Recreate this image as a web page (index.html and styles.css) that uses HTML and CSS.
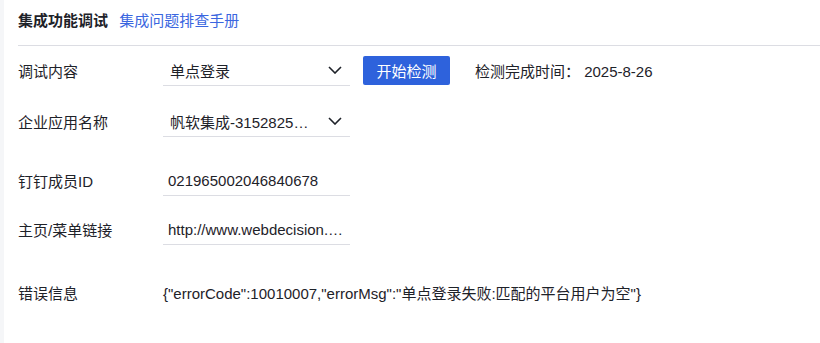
FILE: index.html
```html
<!DOCTYPE html>
<html lang="zh-CN">
  <head>
    <meta charset="UTF-8" />
    <meta name="viewport" content="width=device-width, initial-scale=1.0" />
    <title>集成功能调试</title>
    <link rel="stylesheet" href="styles.css">
  </head>
  <body>
    <div class="side"></div>
    <div class="main">
      <div class="header">
        <span class="title">集成功能调试</span>
        <a class="link" href="#">集成问题排查手册</a>
      </div>

      <!-- debug form -->
      <div class="row row-1">
        <div class="label">调试内容</div>
        <div class="select">
          <span class="value">单点登录</span>
          <svg class="arrow" width="14" height="8" viewBox="0 0 14 8"><path d="M1 1l6 6 6-6" fill="none" stroke="#1e2229" stroke-width="1.6"/></svg>
        </div>
        <button class="btn">开始检测</button>
        <span class="done">检测完成时间： 2025-8-26</span>
      </div>

      <div class="row row-2">
        <div class="label">企业应用名称</div>
        <div class="select">
          <span class="value">帆软集成-3152825101397</span>
          <svg class="arrow" width="14" height="8" viewBox="0 0 14 8"><path d="M1 1l6 6 6-6" fill="none" stroke="#1e2229" stroke-width="1.6"/></svg>
        </div>
      </div>

      <div class="row row-3">
        <div class="label">钉钉成员ID</div>
        <div class="input"><span class="value">021965002046840678</span></div>
      </div>

      <div class="row row-4">
        <div class="label">主页/菜单链接</div>
        <div class="input"><span class="value">http://www.webdecision.com/decision</span></div>
      </div>

      <div class="row row-5">
        <div class="label">错误信息</div>
        <div class="error">{"errorCode":10010007,"errorMsg":"单点登录失败:匹配的平台用户为空"}</div>
      </div>
    </div>
  </body>
</html>
```

FILE: styles.css
```css
body {
  margin: 0;
  padding: 0;
  display: flex;
  min-height: 343px;
  background-color: #fff;
  font-family: "Liberation Sans", "Noto Sans CJK SC", sans-serif;
  font-size: 15px;
  color: #1e2229;
}

.side {
  width: 4px;
  background-color: #f5f6f8;
}

.main {
  flex: 1;
  padding-left: 14px;
}

.header {
  height: 46px;
  box-sizing: border-box;
  padding-top: 10px;
  line-height: 21px;
  border-bottom: 1px solid #dcdde3;
}

.title {
  font-weight: bold;
  margin-right: 7px;
}

.link {
  color: #3a66e0;
  text-decoration: none;
}

.row {
  display: flex;
  align-items: center;
  height: 31px;
}

.row-1 { margin-top: 9px; }
.row-2 { margin-top: 20px; }
.row-3 { margin-top: 28px; }
.row-4 { margin-top: 18px; }
.row-5 { margin-top: 32px; }

.label {
  width: 145px;
}

.select,
.input {
  width: 187px;
  height: 31px;
  box-sizing: border-box;
  border-bottom: 1px solid #dcdde3;
  display: flex;
  align-items: center;
}

.select {
  padding: 0 8px 0 7px;
}

.select .value {
  width: 140px;
  white-space: nowrap;
  overflow: hidden;
  text-overflow: ellipsis;
}

.arrow {
  margin-left: auto;
}

.input {
  padding: 0 4px 0 5px;
}

.input .value {
  width: 178px;
  white-space: nowrap;
  overflow: hidden;
  text-overflow: ellipsis;
}

.btn {
  margin-left: 13px;
  width: 87px;
  height: 29px;
  border: none;
  border-radius: 2px;
  background-color: #2e62dc;
  color: #fff;
  font-family: inherit;
  font-size: 15px;
  padding: 0;
  cursor: pointer;
}

.done {
  margin-left: 25px;
}
```
